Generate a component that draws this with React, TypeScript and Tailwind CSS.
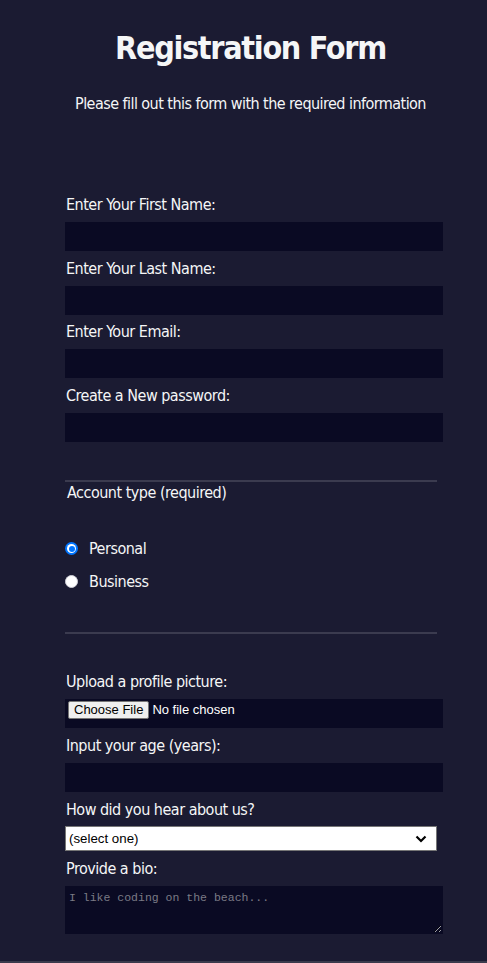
import React from "react";

const font = { fontFamily: "'DejaVu Sans Condensed', 'DejaVu Sans', sans-serif", letterSpacing: "-0.5px" };
const arial = { fontFamily: "'Liberation Sans', Arial, sans-serif", letterSpacing: "0px" };

function Label({ children }: { children: React.ReactNode }) {
  return <div className="h-[19px] leading-[19px] text-[16px] text-[#f5f6f7]">{children}</div>;
}

function TextBox({ mb = "mb-[8px]" }: { mb?: string }) {
  return (
    <input
      type="text"
      className={`mt-[8px] ${mb} block h-[29px] w-[378px] bg-[#0a0a23] border border-[#0a0a23] outline-none text-white`}
    />
  );
}

export default function App() {
  return (
    <div className="w-[487px] h-[963px] bg-[#1b1b32] flex flex-col overflow-hidden">
      <div className="h-[961px] text-[#f5f6f7] flex flex-col" style={font}>
        <div className="pl-[14px] flex flex-col items-center">
          <h1
            className="mt-[29px] text-[32px] leading-[38px] font-bold text-center"
            style={{ letterSpacing: "-1.3px" }}
          >
            Registration Form
          </h1>
          <p className="mt-[27px] text-[16px] leading-[19px] text-center" style={{ letterSpacing: "-0.55px" }}>
            Please fill out this form with the required information
          </p>
        </div>
        <div className="mt-[82px] w-[372px] ml-[65px] flex flex-col">
          <div className="pl-[1px]">
            <Label>Enter Your First Name:</Label>
          </div>
          <TextBox />
          <div className="pl-[1px]">
            <Label>Enter Your Last Name:</Label>
          </div>
          <TextBox mb="mb-[7px]" />
          <div className="pl-[1px]">
            <Label>Enter Your Email:</Label>
          </div>
          <TextBox />
          <div className="pl-[1px]">
            <Label>Create a New password:</Label>
          </div>
          <TextBox />
          <div className="mt-[30px] h-[2px] w-[372px] bg-[#3b3b4f]" />
          <div className="mt-[1px] pl-[2px]">
            <Label>Account type (required)</Label>
          </div>
          <div className="mt-[37px] flex items-center h-[19px]">
            <span className="w-[13px] h-[13px] rounded-full bg-[#0075ff] flex items-center justify-center">
              <span className="w-[9px] h-[9px] rounded-full bg-white flex items-center justify-center">
                <span className="w-[6px] h-[6px] rounded-full bg-[#0075ff]" />
              </span>
            </span>
            <span className="ml-[11px] text-[16px] leading-[19px]">Personal</span>
          </div>
          <div className="mt-[14px] flex items-center h-[19px]">
            <span className="w-[13px] h-[13px] rounded-full bg-white border border-[#d0d0d8]" />
            <span className="ml-[11px] text-[16px] leading-[19px]">Business</span>
          </div>
          <div className="mt-[41px] h-[2px] w-[372px] bg-[#3b3b4f]" />
          <div className="mt-[38px] pl-[1px]">
            <Label>Upload a profile picture:</Label>
          </div>
          <div className="mt-[8px] mb-[8px] h-[29px] w-[378px] bg-[#0a0a23] flex items-start pt-[2px] pl-[3px]">
            <span
              className="h-[18px] px-[5px] flex items-center bg-[#efefef] border border-[#767676] text-black text-[13px] rounded-[2px]"
              style={arial}
            >
              Choose File
            </span>
            <span className="ml-[3px] h-[18px] flex items-center text-white text-[13px]" style={arial}>
              No file chosen
            </span>
          </div>
          <div className="pl-[1px]">
            <Label>Input your age (years):</Label>
          </div>
          <TextBox />
          <div className="pl-[1px]">
            <Label>How did you hear about us?</Label>
          </div>
          <div
            className="mt-[7px] mb-[8px] h-[25px] w-[372px] bg-white border border-[#767676] flex items-center justify-between pl-[3px] pr-[9px] text-black text-[13.3px]"
            style={arial}
          >
            <span>(select one)</span>
            <svg width="12" height="8" viewBox="0 0 12 8">
              <path d="M1.5 1.5 L6 6 L10.5 1.5" stroke="#000" strokeWidth="2.2" fill="none" />
            </svg>
          </div>
          <div className="pl-[1px]">
            <Label>Provide a bio:</Label>
          </div>
          <textarea
            placeholder="I like coding on the beach..."
            className="mt-[8px] block h-[48px] w-[378px] bg-[#0a0a23] border border-[#0a0a23] outline-none text-white px-[3px] pt-[2px] text-[11.5px] placeholder:text-[#7a7a85]"
            style={{ fontFamily: "'Liberation Mono', 'DejaVu Sans Mono', monospace", letterSpacing: "0px" }}
          />
        </div>
      </div>
      <div className="h-[2px] w-full bg-[#3a3a4c]" />
    </div>
  );
}
